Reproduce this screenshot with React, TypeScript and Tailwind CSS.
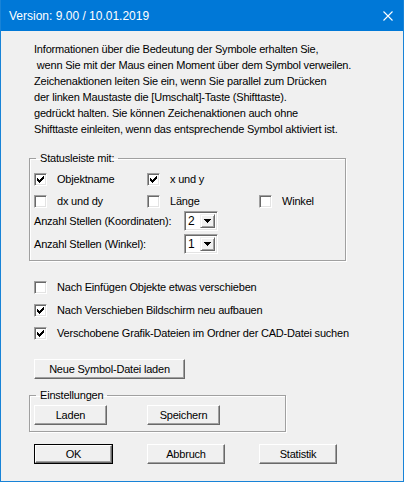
import React from "react";

const font = { fontFamily: '"Liberation Sans", Arial, sans-serif' };

function Check({ checked }: { checked?: boolean }) {
  return (
    <span className="relative inline-block w-[13px] h-[13px] shrink-0 bg-white border border-t-[#a0a0a0] border-l-[#a0a0a0] border-b-white border-r-white shadow-[inset_1px_1px_0_#696969,inset_-1px_-1px_0_#e3e3e3]">
      {checked && (
        <svg className="absolute left-[2px] top-[2px]" width="7" height="7" viewBox="0 0 7 7" shapeRendering="crispEdges">
          <path d="M0 2h1v1h1v1h1V3h1V2h1V1h1V0h1v3H6v1H5v1H4v1H3v1H2V6H1V5H0z" fill="#000" />
        </svg>
      )}
    </span>
  );
}

function Btn({ label, w, def }: { label: string; w: string; def?: boolean }) {
  const inner = (
    <span className="flex h-full w-full items-center justify-center bg-[#f0f0f0] border border-t-white border-l-white border-b-[#696969] border-r-[#696969] shadow-[inset_-1px_-1px_0_#a0a0a0] text-[11px] text-black">
      {label}
    </span>
  );
  return def ? (
    <div className={`h-[20px] ${w} border border-black`}>{inner}</div>
  ) : (
    <div className={`h-[20px] ${w}`}>{inner}</div>
  );
}

function Combo({ value }: { value: string }) {
  return (
    <div className="flex h-[20px] w-[34px] bg-white border border-t-[#a0a0a0] border-l-[#a0a0a0] border-b-white border-r-white shadow-[inset_1px_1px_0_#696969,inset_-1px_-1px_0_#e3e3e3] p-[2px]">
      <span className="flex-1 pl-[1px] text-[12px] leading-[14px] text-black">{value}</span>
      <span className="flex w-[15px] items-center justify-center bg-[#f0f0f0] border border-t-[#f0f0f0] border-l-[#f0f0f0] border-b-[#696969] border-r-[#696969] shadow-[inset_1px_1px_0_#fff,inset_-1px_-1px_0_#a0a0a0]">
        <svg width="7" height="4" viewBox="0 0 7 4" shapeRendering="crispEdges">
          <path d="M0 0h7v1H6v1H5v1H4v1H3V3H2V2H1V1H0z" fill="#000" />
        </svg>
      </span>
    </div>
  );
}

function Row({ label, checked, h = "h-[23px]" }: { label: string; checked?: boolean; h?: string }) {
  return (
    <div className={`flex items-center gap-[10px] ${h}`}>
      <Check checked={checked} />
      <span>{label}</span>
    </div>
  );
}

export default function App() {
  return (
    <div style={font} className="w-[404px] h-[482px] bg-[#f0f0f0] border-x border-b border-[#1883d7] flex flex-col text-[11px] tracking-[-0.2px] text-black overflow-hidden">
      <div className="h-[31px] -mx-px bg-[#0078d7] flex items-center justify-between pl-[9px] pr-[11px] text-white tracking-normal">
        <span className="text-[12px]">Version: 9.00 / 10.01.2019</span>
        <svg width="10" height="10" viewBox="0 0 10 10">
          <path d="M0.5 0.5L9.5 9.5M9.5 0.5L0.5 9.5" stroke="#fff" strokeWidth="1.1" />
        </svg>
      </div>

      <div className="pl-[28px] pt-[10px]">
        <div className="pl-[5px] leading-[16px] whitespace-pre">
          <div>Informationen über die Bedeutung der Symbole erhalten Sie,</div>
          <div>{" wenn Sie mit der Maus einen Moment über dem Symbol verweilen."}</div>
          <div>Zeichenaktionen leiten Sie ein, wenn Sie parallel zum Drücken</div>
          <div>der linken Maustaste die [Umschalt]-Taste (Shifttaste).</div>
          <div>gedrückt halten. Sie können Zeichenaktionen auch ohne</div>
          <div>Shifttaste einleiten, wenn das entsprechende Symbol aktiviert ist.</div>
        </div>

        <fieldset className="mt-[14px] w-[317px] border border-[#a0a0a0] shadow-[inset_1px_1px_0_#fff,1px_1px_0_#fff] pl-[4px] pt-[3px] pb-[6px]">
          <legend className="ml-[2px] px-[4px] leading-[14px]">Statusleiste mit:</legend>
          <div className="grid grid-cols-[113px_112px_auto]">
            <Row label="Objektname" checked />
            <Row label="x und y" checked />
            <div />
            <Row label="dx und dy" h="h-[20px]" />
            <Row label="Länge" h="h-[20px]" />
            <Row label="Winkel" h="h-[20px]" />
          </div>
          <div className="flex items-center">
            <span className="w-[150px]">Anzahl Stellen (Koordinaten):</span>
            <Combo value="2" />
          </div>
          <div className="mt-[3px] flex items-center">
            <span className="w-[150px]">Anzahl Stellen (Winkel):</span>
            <Combo value="1" />
          </div>
        </fieldset>

        <div className="mt-[15px] pl-[5px]">
          <Row label="Nach Einfügen Objekte etwas verschieben" />
          <Row label="Nach Verschieben Bildschirm neu aufbauen" checked />
          <Row label="Verschobene Grafik-Dateien im Ordner der CAD-Datei suchen" checked />
        </div>

        <div className="mt-[14px] pl-[5px]">
          <Btn label="Neue Symbol-Datei laden" w="w-[151px]" />
        </div>

        <fieldset className="mt-[9px] w-[257px] border border-[#a0a0a0] shadow-[inset_1px_1px_0_#fff,1px_1px_0_#fff] pl-[4px] pt-[3px] pb-[6px]">
          <legend className="ml-[2px] px-[4px] leading-[14px]">Einstellungen</legend>
          <div className="flex gap-[40px]">
            <Btn label="Laden" w="w-[73px]" />
            <Btn label="Speichern" w="w-[73px]" />
          </div>
        </fieldset>

        <div className="mt-[12px] pl-[5px] flex">
          <Btn label="OK" w="w-[79px]" def />
          <div className="ml-[34px]">
            <Btn label="Abbruch" w="w-[78px]" />
          </div>
          <div className="ml-[34px]">
            <Btn label="Statistik" w="w-[78px]" />
          </div>
        </div>
      </div>
    </div>
  );
}
